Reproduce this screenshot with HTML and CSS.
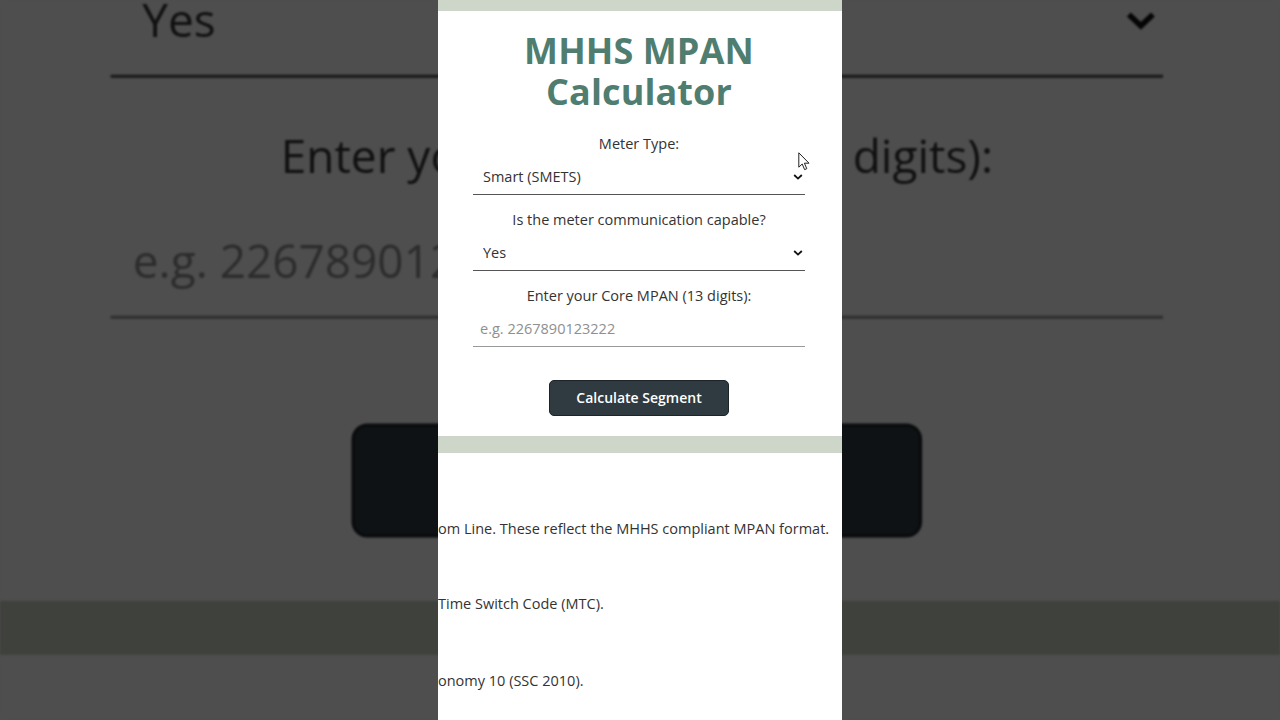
FILE: index.html
```html
<!DOCTYPE html>
<html lang="en">
<head>
<meta charset="utf-8">
<title>MHHS MPAN Calculator</title>
<link rel="stylesheet" href="styles.css">
</head>
<body>
<div class="stage">
  <div class="backdrop" aria-hidden="true">
    <div class="phone phone-copy">
      <div class="bar"></div>
      <div class="card">
        <h1 class="title">MHHS MPAN<br>Calculator</h1>
        <div class="field">
          <div class="label">Meter Type:</div>
          <div class="select"><span>Smart (SMETS)</span><svg class="chev" viewBox="0 0 10 6" width="10" height="6"><path d="M1.2 1 L5 4.6 L8.8 1" fill="none" stroke="#111" stroke-width="1.8"/></svg></div>
        </div>
        <div class="field">
          <div class="label">Is the meter communication capable?</div>
          <div class="select"><span>Yes</span><svg class="chev" viewBox="0 0 10 6" width="10" height="6"><path d="M1.2 1 L5 4.6 L8.8 1" fill="none" stroke="#111" stroke-width="1.8"/></svg></div>
        </div>
        <div class="field">
          <div class="label">Enter your Core MPAN (13 digits):</div>
          <div class="input"><span class="ph">e.g. 2267890123222</span></div>
        </div>
        <div class="btn">Calculate Segment</div>
      </div>
      <div class="band"></div>
      <div class="info">
        <p class="line l1">om Line. These reflect the MHHS compliant MPAN format.</p>
        <p class="line l2">Time Switch Code (MTC).</p>
        <p class="line l3">onomy 10 (SSC 2010).</p>
      </div>
    </div>
  </div>

  <div class="phone">
    <div class="bar"></div>
    <div class="card">
      <h1 class="title">MHHS MPAN<br>Calculator</h1>
      <div class="field">
        <label class="label" for="meter">Meter Type:</label>
        <div class="select-wrap">
          <select id="meter" class="select"><option>Smart (SMETS)</option><option>Traditional</option></select>
          <svg class="chev" viewBox="0 0 10 6" width="10" height="6"><path d="M1.2 1 L5 4.6 L8.8 1" fill="none" stroke="#111" stroke-width="1.8"/></svg>
        </div>
      </div>
      <div class="field">
        <label class="label" for="comms">Is the meter communication capable?</label>
        <div class="select-wrap">
          <select id="comms" class="select"><option>Yes</option><option>No</option></select>
          <svg class="chev" viewBox="0 0 10 6" width="10" height="6"><path d="M1.2 1 L5 4.6 L8.8 1" fill="none" stroke="#111" stroke-width="1.8"/></svg>
        </div>
      </div>
      <div class="field">
        <label class="label" for="mpan">Enter your Core MPAN (13 digits):</label>
        <input id="mpan" class="input" type="text" placeholder="e.g. 2267890123222">
      </div>
      <button class="btn" type="button">Calculate Segment</button>
    </div>
    <div class="band"></div>
    <div class="info">
      <p class="line l1">om Line. These reflect the MHHS compliant MPAN format.</p>
      <p class="line l2">Time Switch Code (MTC).</p>
      <p class="line l3">onomy 10 (SSC 2010).</p>
    </div>
  </div>

  <svg class="cursor" viewBox="0 0 12 19" width="12" height="19"><path d="M0.8 0.8 L0.8 15.2 L4.2 12 L6.6 17.6 L8.8 16.7 L6.4 11.2 L11 11.2 Z" fill="#fff" stroke="#222" stroke-width="1" stroke-linejoin="round"/></svg>
</div>
</body>
</html>
```
FILE: styles.css
```css
* { box-sizing: border-box; }
html, body { margin: 0; padding: 0; }
body {
  width: 1280px;
  height: 720px;
  overflow: hidden;
  background: #4e4e4e;
  font-family: "Open Sans", "Noto Sans", sans-serif;
  color: #333;
}
.stage {
  position: relative;
  width: 1280px;
  height: 720px;
  overflow: hidden;
}
.backdrop {
  position: absolute;
  inset: 0;
  display: flex;
  justify-content: center;
  filter: brightness(0.306) blur(1.2px);
  overflow: hidden;
}
.phone-copy {
  transform: scale(3.17);
  transform-origin: 202px 360px;
}
.phone {
  position: relative;
  width: 404px;
  height: 720px;
  margin: 0 auto;
  background: #fff;
  display: flex;
  flex-direction: column;
  overflow: hidden;
}
.bar {
  height: 11px;
  background: #cdd6c8;
  flex: none;
}
.card {
  display: flex;
  flex-direction: column;
  align-items: center;
  padding: 19px 37px 20px 35px;
  flex: none;
}
.title {
  margin: 0;
  font-size: 36px;
  line-height: 41px;
  font-weight: 700;
  color: #4f7d70;
  text-align: center;
  letter-spacing: 0.1px;
}
.field {
  width: 100%;
  display: flex;
  flex-direction: column;
  align-items: center;
  gap: 6px;
}
.title + .field { margin-top: 22px; }
.field + .field { margin-top: 15px; }
.label {
  display: block;
  font-size: 14.5px;
  line-height: 20px;
  color: #333;
}
.select-wrap {
  position: relative;
  width: 100%;
}
.select {
  display: flex;
  align-items: center;
  width: 100%;
  height: 35px;
  margin: 0;
  padding: 0 0 2px 10px;
  border: none;
  border-bottom: 1px solid #555;
  border-radius: 0;
  background: transparent;
  font-family: inherit;
  font-size: 14.5px;
  color: #333;
  -webkit-appearance: none;
  appearance: none;
  outline: none;
}
.phone-copy .select { position: relative; }
.chev {
  position: absolute;
  right: 2px;
  top: 14px;
  width: 10px;
  height: 6px;
  pointer-events: none;
}
.input {
  display: flex;
  align-items: center;
  width: 100%;
  height: 35px;
  margin: 0;
  padding: 0 0 2px 7px;
  border: none;
  border-bottom: 1px solid #999;
  background: transparent;
  font-family: inherit;
  font-size: 14.5px;
  color: #333;
  outline: none;
}
.input::placeholder, .ph { color: #8f8f8f; }
.btn {
  display: flex;
  align-items: center;
  justify-content: center;
  margin-top: 33px;
  width: 180px;
  height: 36px;
  padding: 0 0 1px;
  background: #2f3b40;
  border: 1px solid #1d2528;
  border-radius: 5px;
  color: #fff;
  font-family: inherit;
  font-size: 14px;
  font-weight: 600;
}
.band {
  height: 17px;
  background: #cdd6c8;
  flex: none;
}
.info {
  display: flex;
  flex-direction: column;
}
.line {
  margin: 0;
  font-size: 14.5px;
  line-height: 20px;
  white-space: nowrap;
  color: #333;
}
.l1 { margin-top: 66px; }
.l2 { margin-top: 55px; }
.l3 { margin-top: 57px; }
.cursor {
  position: absolute;
  left: 798px;
  top: 152px;
}
```
